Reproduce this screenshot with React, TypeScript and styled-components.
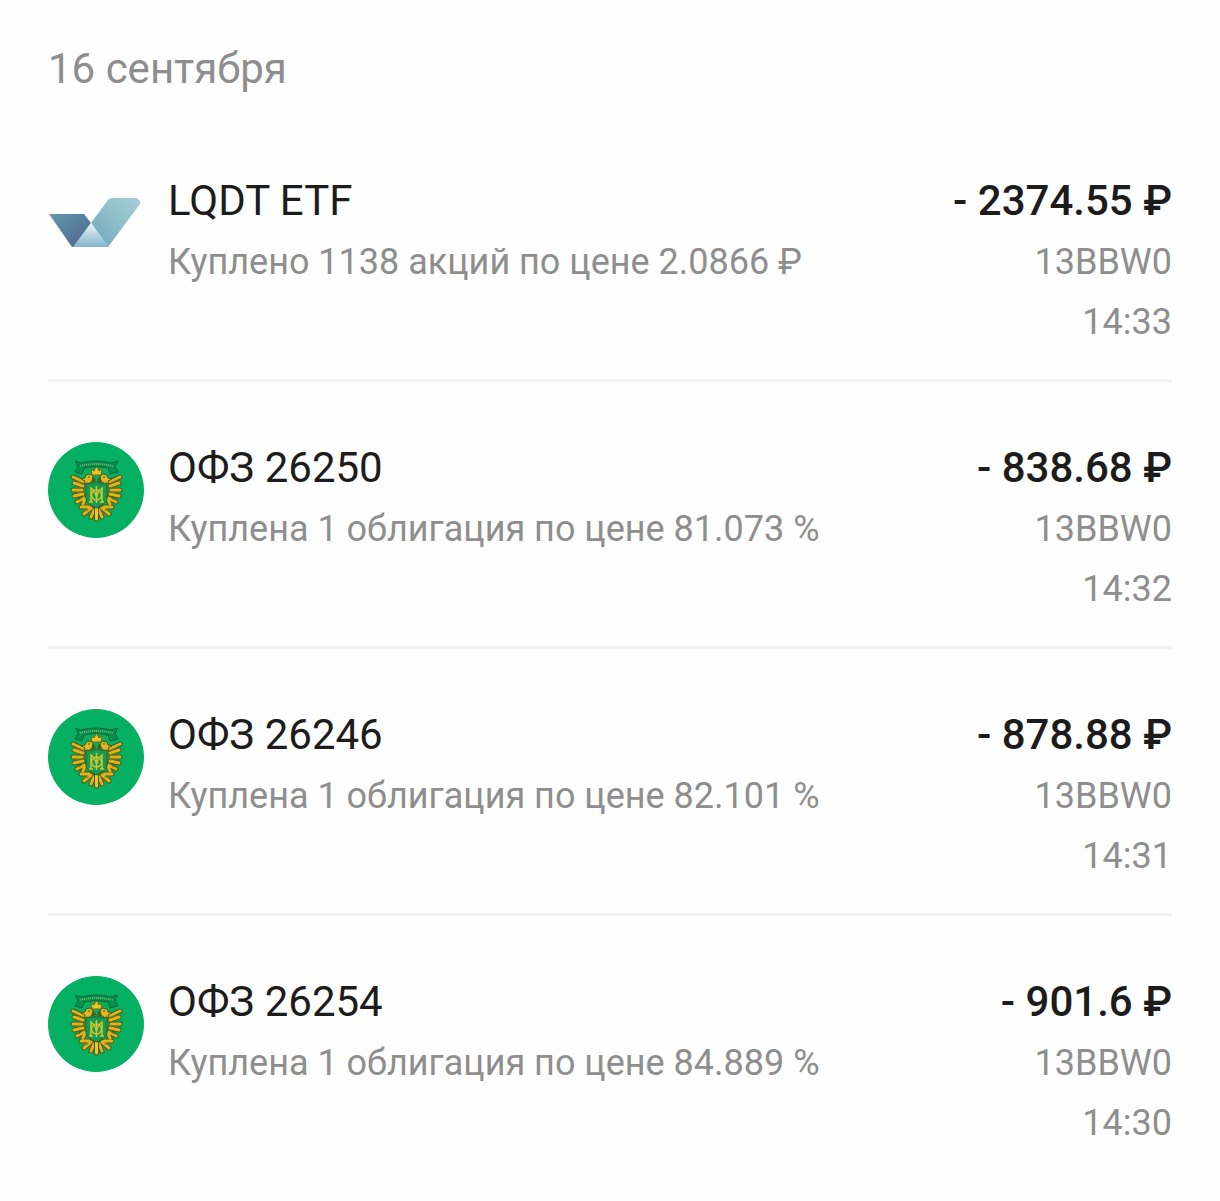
import React from 'react';
import styled, { createGlobalStyle } from 'styled-components';

const GlobalStyle = createGlobalStyle`
  * {
    box-sizing: border-box;
  }

  body {
    margin: 0;
    background: #fefefe;
    color: #1c1c1c;
    font-family: Roboto, "Noto Sans", sans-serif;
  }
`;

const Page = styled.main`
  padding: 39px 48px 0;
`;

const DateHeading = styled.h2`
  margin: 0 0 16px;
  color: #8e8e8e;
  font-size: 42px;
  font-weight: 400;
  line-height: 60px;
`;

const OperationList = styled.ul`
  margin: 0;
  padding: 0;
  list-style: none;
`;

const Operation = styled.li`
  display: flex;
  gap: 24px;
  padding: 55px 0 27px;
  border-bottom: 3px solid #f1f1f1;

  &:last-child {
    border-bottom: none;
  }
`;

const Logo = styled.div`
  flex: none;
  width: 96px;
  height: 96px;
  margin-top: 5px;

  svg {
    display: block;
  }
`;

const Info = styled.div`
  flex: 1;
  min-width: 0;
`;

const Side = styled.div`
  flex: none;
  text-align: right;
`;

const Title = styled.div<{ $bold?: boolean }>`
  font-size: 42px;
  font-weight: ${({ $bold }) => ($bold ? 500 : 400)};
  line-height: 62px;
`;

const Caption = styled.div`
  color: #8e8e8e;
  font-size: 36px;
  line-height: 60px;
`;

interface OperationRecord {
  kind: 'fund' | 'bond';
  title: string;
  caption: string;
  amount: string;
  account: string;
  time: string;
}

const operations: OperationRecord[] = [
  {
    kind: 'fund',
    title: 'LQDT ETF',
    caption: 'Куплено 1138 акций по цене 2.0866 ₽',
    amount: '- 2374.55 ₽',
    account: '13BBW0',
    time: '14:33',
  },
  {
    kind: 'bond',
    title: 'ОФЗ 26250',
    caption: 'Куплена 1 облигация по цене 81.073 %',
    amount: '- 838.68 ₽',
    account: '13BBW0',
    time: '14:32',
  },
  {
    kind: 'bond',
    title: 'ОФЗ 26246',
    caption: 'Куплена 1 облигация по цене 82.101 %',
    amount: '- 878.88 ₽',
    account: '13BBW0',
    time: '14:31',
  },
  {
    kind: 'bond',
    title: 'ОФЗ 26254',
    caption: 'Куплена 1 облигация по цене 84.889 %',
    amount: '- 901.6 ₽',
    account: '13BBW0',
    time: '14:30',
  },
];

const FundLogo = () => (
  <svg width="96" height="96" viewBox="0 0 96 96" aria-hidden="true">
    <defs>
      <linearGradient id="fund-left" x1="0" y1="0" x2="1" y2="1">
        <stop offset="0" stopColor="#6498ad" />
        <stop offset="0.5" stopColor="#557f9d" />
        <stop offset="1" stopColor="#555f8b" />
      </linearGradient>
      <linearGradient id="fund-right" x1="1" y1="0" x2="0" y2="1">
        <stop offset="0" stopColor="#a9ced6" />
        <stop offset="0.5" stopColor="#8ebcc9" />
        <stop offset="1" stopColor="#6ca5b8" />
      </linearGradient>
      <linearGradient id="fund-middle" x1="0" y1="0" x2="0" y2="1">
        <stop offset="0" stopColor="#eef5f9" />
        <stop offset="1" stopColor="#82b5ca" />
      </linearGradient>
    </defs>
    <path d="M1 39H36L43 48L26 72H24Z" fill="url(#fund-left)" />
    <path d="M43 48L60 25Q61 23 64 23H89L92 26V29L60 72Z" fill="url(#fund-right)" />
    <path d="M43 48L61 72H25Z" fill="url(#fund-middle)" />
  </svg>
);

// one side of the eagle, mirrored for the other
const EagleHalf = () => (
  <>
    <g fill="none" strokeLinecap="round">
      <path
        d="M25 35L36 40M26 41L35 44M25 48L34 48M26 54L35 52M29 60L36 56M35 62L37 57M41 35L45 38"
        stroke="#4c5a1c"
        strokeWidth="5"
      />
      <path
        d="M33 65L41 65M36 72L43 66M43 75L46 68"
        stroke="#4c5a1c"
        strokeWidth="5"
      />
      <path
        d="M25 35L36 40M26 41L35 44M25 48L34 48M26 54L35 52M29 60L36 56M35 62L37 57"
        stroke="#dcb41d"
        strokeWidth="3"
      />
      <path d="M33 65L41 65M36 72L43 66M43 75L46 68" stroke="#dcb41d" strokeWidth="3" />
      <path d="M27 38L34 42M28 46L34 46M28 51L34 50M31 58L36 54M36 68L40 68M41 72L43 70" stroke="#7a7518" strokeWidth="1" />
    </g>
    <path d="M33 37L37 36L38 33L42 32L45 34L44 39L40 42L36 41L37 39Z" fill="#dfb91f" stroke="#4c5a1c" strokeWidth="1" />
    <path d="M40 35H42" stroke="#4c5a1c" strokeWidth="1" />
  </>
);

const BondLogo = () => (
  <svg width="96" height="96" viewBox="0 0 96 96" aria-hidden="true">
    <circle cx="48" cy="48" r="48" fill="#05b062" />

    {/* ribbon */}
    <path
      d="M27 19L33 21Q48 17 63 21L70 19L67 24L70 30L62 32L60 26Q48 23 36 26L34 32L27 30L30 24Z"
      fill="#078f50"
      stroke="#07683a"
      strokeWidth="1"
    />
    <path d="M32 24Q48 20 65 24" fill="none" stroke="#8dc257" strokeWidth="1.5" strokeDasharray="1 1" />

    <EagleHalf />
    <g transform="matrix(-1 0 0 1 97 0)">
      <EagleHalf />
    </g>
    <path d="M48.500 66V77" stroke="#4c5a1c" strokeWidth="5" strokeLinecap="round" />
    <path d="M48.500 66V77" stroke="#edc623" strokeWidth="3" strokeLinecap="round" />

    {/* crown */}
    <path d="M43 27L46 29L48 25H49L51 29L54 27L53 33H44Z" fill="#edc623" stroke="#706d17" strokeWidth="1" />

    {/* shield with monogram */}
    <path d="M38 41Q44 43 48.500 40Q53 43 59 41V57Q58 62 48.500 66Q39 62 38 57Z" fill="#159c54" stroke="#38611f" strokeWidth="1" />
    <g fill="none" stroke="#d2c32a" strokeWidth="1.5">
      <path d="M43 60V46Q47 49 48.500 55Q50 49 54 46V60" />
      <circle cx="48.500" cy="53" r="5" />
      <path d="M48.500 44V61M41 60H45M52 60H56" />
    </g>
  </svg>
);

export default function App() {
  return (
    <>
      <GlobalStyle />
      <Page>
        <DateHeading>16 сентября</DateHeading>
        <OperationList>
          {operations.map((item) => (
            <Operation key={item.title}>
              <Logo>{item.kind === 'fund' ? <FundLogo /> : <BondLogo />}</Logo>
              <Info>
                <Title>{item.title}</Title>
                <Caption>{item.caption}</Caption>
              </Info>
              <Side>
                <Title $bold>{item.amount}</Title>
                <Caption>{item.account}</Caption>
                <Caption>{item.time}</Caption>
              </Side>
            </Operation>
          ))}
        </OperationList>
      </Page>
    </>
  );
}
